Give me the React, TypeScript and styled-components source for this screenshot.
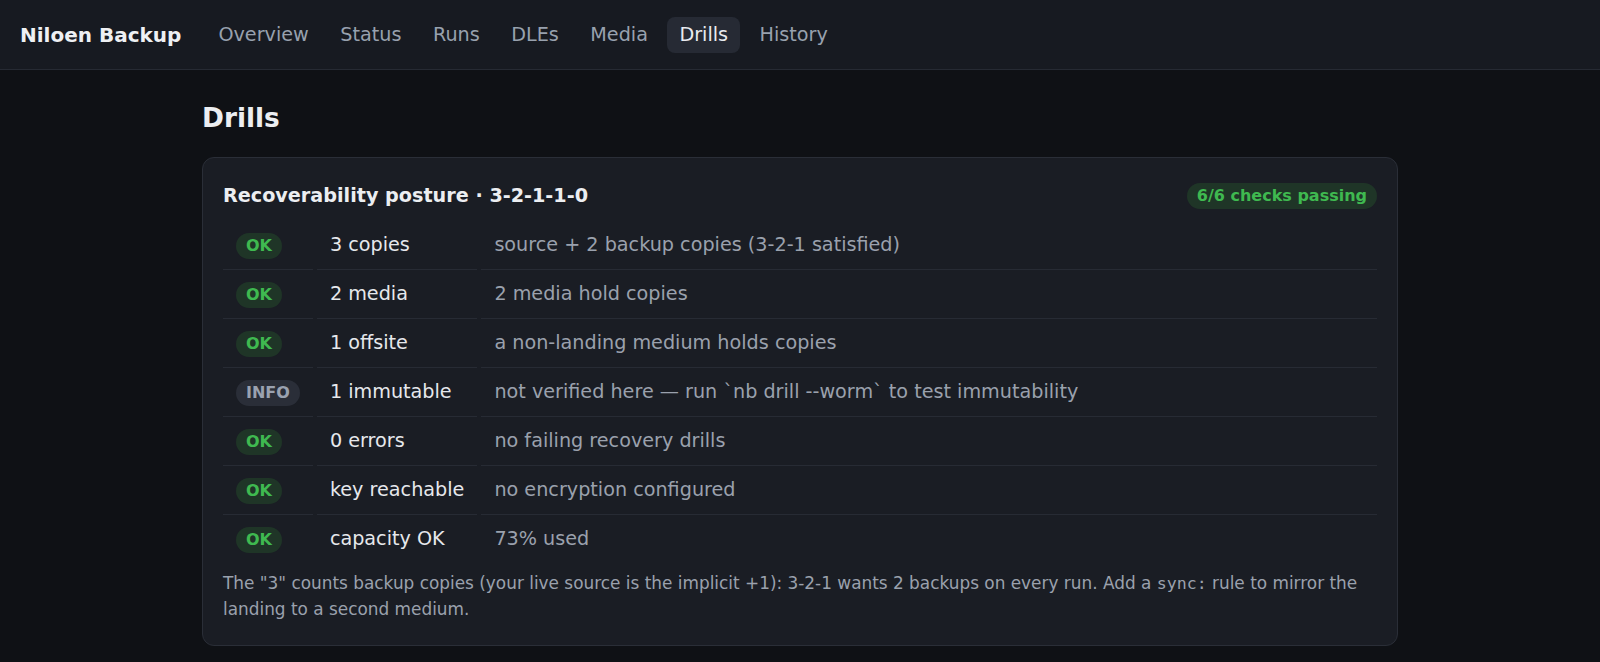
import styled, { createGlobalStyle } from 'styled-components'

type Level = 'ok' | 'info'

interface Check {
  level: Level
  name: string
  detail: string
}

const checks: Check[] = [
  { level: 'ok', name: '3 copies', detail: 'source + 2 backup copies (3-2-1 satisfied)' },
  { level: 'ok', name: '2 media', detail: '2 media hold copies' },
  { level: 'ok', name: '1 offsite', detail: 'a non-landing medium holds copies' },
  { level: 'info', name: '1 immutable', detail: 'not verified here — run `nb drill --worm` to test immutability' },
  { level: 'ok', name: '0 errors', detail: 'no failing recovery drills' },
  { level: 'ok', name: 'key reachable', detail: 'no encryption configured' },
  { level: 'ok', name: 'capacity OK', detail: '73% used' },
]

const navItems = ['Overview', 'Status', 'Runs', 'DLEs', 'Media', 'Drills', 'History']

const GlobalStyle = createGlobalStyle`
  html, body {
    margin: 0;
    padding: 0;
    background: #0f1115;
    color: #e6e8ec;
    font-family: "DejaVu Sans", "Noto Sans", sans-serif;
  }
  * {
    box-sizing: border-box;
  }
`

const TopBar = styled.header`
  display: flex;
  align-items: center;
  gap: 25px;
  height: 70px;
  padding: 0 20px;
  background: #171a21;
  border-bottom: 1px solid #262a33;
`

const Brand = styled.div`
  font-size: 20px;
  font-weight: bold;
  color: #eef0f3;
`

const Nav = styled.nav`
  display: flex;
  align-items: center;
  gap: 7.5px;
`

const NavLink = styled.a<{ $active?: boolean }>`
  display: block;
  padding: 7px 12px;
  border-radius: 8px;
  font-size: 19.2px;
  line-height: 22px;
  text-decoration: none;
  color: ${p => (p.$active ? '#e9ebef' : '#98a1ae')};
  background: ${p => (p.$active ? '#262a34' : 'transparent')};
`

const Main = styled.main`
  max-width: 1196px;
  margin: 0 auto;
  padding-top: 32px;
`

const PageTitle = styled.h1`
  margin: 0 0 24px;
  font-size: 26.4px;
  font-weight: bold;
  color: #eceef1;
`

const Card = styled.section`
  background: #1a1d24;
  border: 1px solid #2a2e37;
  border-radius: 12px;
  padding: 23px 20px 24px;
`

const CardHead = styled.div`
  display: flex;
  align-items: center;
  justify-content: space-between;
  margin-bottom: 12px;
`

const CardTitle = styled.h2`
  margin: 0;
  font-size: 19.2px;
  font-weight: bold;
  color: #eceef1;
`

const Pill = styled.span<{ $level: Level }>`
  display: inline-block;
  padding: 3px 10px;
  border-radius: 999px;
  font-size: 16px;
  line-height: 20px;
  font-weight: bold;
  white-space: nowrap;
  color: ${p => (p.$level === 'ok' ? '#3fb950' : '#9aa2b0')};
  background: ${p => (p.$level === 'ok' ? '#1f3527' : '#2a2e38')};
`

const HeadPill = styled(Pill)`
  margin-top: 2px;
`

const Table = styled.table`
  width: calc(100% + 8px);
  margin: 0 -4px;
  border-collapse: separate;
  border-spacing: 4px 0;
`

const Row = styled.tr`
  &:last-child td {
    border-bottom: none;
  }
`

const Cell = styled.td<{ $tone?: 'name' | 'detail' }>`
  padding: 10px 13px;
  border-bottom: 1px solid #272b34;
  font-size: 19.2px;
  line-height: 28px;
  vertical-align: middle;
  white-space: ${p => (p.$tone === 'detail' ? 'normal' : 'nowrap')};
  width: ${p => (p.$tone === 'detail' ? 'auto' : '1px')};
  color: ${p => (p.$tone === 'detail' ? '#9aa1ad' : '#e6e8ec')};
`

const Note = styled.p`
  margin: 8px 0 0;
  font-size: 16.9px;
  line-height: 24.5px;
  color: #9aa1ad;

  code {
    font-family: "DejaVu Sans Mono", "Liberation Mono", monospace;
    font-size: 16.6px;
  }
`

export default function App() {
  const passing = checks.filter(c => c.level === 'ok').length

  return (
    <>
      <GlobalStyle />
      <TopBar>
        <Brand>Niloen Backup</Brand>
        <Nav>
          {navItems.map(item => (
            <NavLink key={item} href="#" $active={item === 'Drills'}>
              {item}
            </NavLink>
          ))}
        </Nav>
      </TopBar>
      <Main>
        <PageTitle>Drills</PageTitle>
        <Card>
          <CardHead>
            <CardTitle>Recoverability posture · 3-2-1-1-0</CardTitle>
            <HeadPill $level="ok">{passing}/{passing} checks passing</HeadPill>
          </CardHead>
          <Table>
            <tbody>
              {checks.map(c => (
                <Row key={c.name}>
                  <Cell>
                    <Pill $level={c.level}>{c.level === 'ok' ? 'OK' : 'INFO'}</Pill>
                  </Cell>
                  <Cell $tone="name">{c.name}</Cell>
                  <Cell $tone="detail">{c.detail}</Cell>
                </Row>
              ))}
            </tbody>
          </Table>
          <Note>
            The "3" counts backup copies (your live source is the implicit +1): 3-2-1 wants 2 backups on
            every run. Add a <code>sync:</code> rule to mirror the landing to a second medium.
          </Note>
        </Card>
      </Main>
    </>
  )
}
